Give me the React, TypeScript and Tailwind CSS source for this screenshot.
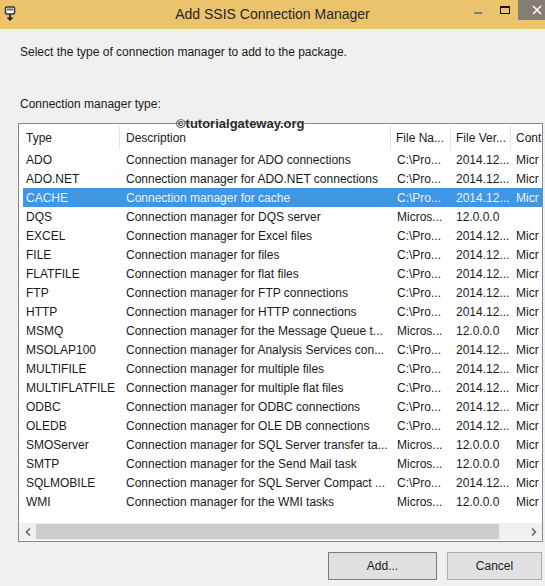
import React from 'react';

type Row = { type: string; desc: string; file: string; ver: string; cont: string };

const rows: Row[] = [
  { type: 'ADO', desc: 'Connection manager for ADO connections', file: 'C:\\Pro...', ver: '2014.12...', cont: 'Micr' },
  { type: 'ADO.NET', desc: 'Connection manager for ADO.NET connections', file: 'C:\\Pro...', ver: '2014.12...', cont: 'Micr' },
  { type: 'CACHE', desc: 'Connection manager for cache', file: 'C:\\Pro...', ver: '2014.12...', cont: 'Micr' },
  { type: 'DQS', desc: 'Connection manager for DQS server', file: 'Micros...', ver: '12.0.0.0', cont: '' },
  { type: 'EXCEL', desc: 'Connection manager for Excel files', file: 'C:\\Pro...', ver: '2014.12...', cont: 'Micr' },
  { type: 'FILE', desc: 'Connection manager for files', file: 'C:\\Pro...', ver: '2014.12...', cont: 'Micr' },
  { type: 'FLATFILE', desc: 'Connection manager for flat files', file: 'C:\\Pro...', ver: '2014.12...', cont: 'Micr' },
  { type: 'FTP', desc: 'Connection manager for FTP connections', file: 'C:\\Pro...', ver: '2014.12...', cont: 'Micr' },
  { type: 'HTTP', desc: 'Connection manager for HTTP connections', file: 'C:\\Pro...', ver: '2014.12...', cont: 'Micr' },
  { type: 'MSMQ', desc: 'Connection manager for the Message Queue t...', file: 'Micros...', ver: '12.0.0.0', cont: 'Micr' },
  { type: 'MSOLAP100', desc: 'Connection manager for Analysis Services con...', file: 'C:\\Pro...', ver: '2014.12...', cont: 'Micr' },
  { type: 'MULTIFILE', desc: 'Connection manager for multiple files', file: 'C:\\Pro...', ver: '2014.12...', cont: 'Micr' },
  { type: 'MULTIFLATFILE', desc: 'Connection manager for multiple flat files', file: 'C:\\Pro...', ver: '2014.12...', cont: 'Micr' },
  { type: 'ODBC', desc: 'Connection manager for ODBC connections', file: 'C:\\Pro...', ver: '2014.12...', cont: 'Micr' },
  { type: 'OLEDB', desc: 'Connection manager for OLE DB connections', file: 'C:\\Pro...', ver: '2014.12...', cont: 'Micr' },
  { type: 'SMOServer', desc: 'Connection manager for SQL Server transfer ta...', file: 'Micros...', ver: '12.0.0.0', cont: 'Micr' },
  { type: 'SMTP', desc: 'Connection manager for the Send Mail task', file: 'Micros...', ver: '12.0.0.0', cont: 'Micr' },
  { type: 'SQLMOBILE', desc: 'Connection manager for SQL Server Compact ...', file: 'C:\\Pro...', ver: '2014.12...', cont: 'Micr' },
  { type: 'WMI', desc: 'Connection manager for the WMI tasks', file: 'Micros...', ver: '12.0.0.0', cont: 'Micr' },
];

const grid = 'grid grid-cols-[97px_271px_60px_60px_1fr]';

const AppIcon = () => (
  <svg width="12" height="16" viewBox="0 0 12 16">
    <rect x="1.5" y="1" width="9" height="7" rx="1" fill="#fff" stroke="#333" strokeWidth="1.5" />
    <rect x="3" y="2.5" width="6" height="2" fill="#666" />
    <path d="M6 8v4" stroke="#333" strokeWidth="2" />
    <path d="M2.5 11.5h7L6 15z" fill="#222" />
  </svg>
);

export default function App() {
  return (
    <div className="relative w-[545px] h-[586px] overflow-hidden bg-[#f0f0f0] flex flex-col font-['Liberation_Sans',Arial,sans-serif] text-[12px] text-[#1a1a1a]">
      {/* title bar */}
      <div className="relative h-[29px] shrink-0 bg-[#ebc36c] flex items-center justify-center">
        <div className="absolute left-[4px] top-[6px]">
          <AppIcon />
        </div>
        <span className="text-[14px] text-[#262626]">Add SSIS Connection Manager</span>
        <div className="absolute right-0 top-0 flex items-start">
          <div className="w-[8px] h-[2px] bg-[#7a7a7a] mt-[12px] mr-[18px]" />
          <div className="w-[10px] h-[8px] border border-[#111] border-t-2 mt-[6px] mr-[8px]" />
          <div className="w-[27px] h-[20px] bg-[#847d74] flex items-center justify-end pr-[2px]">
            <svg width="12" height="12" viewBox="0 0 12 12">
              <path d="M2 2l8 8M10 2l-8 8" stroke="#fff" strokeWidth="1.6" />
            </svg>
          </div>
        </div>
      </div>

      <div className="flex flex-col flex-1">
        <p className="ml-[20px] mt-[15px] leading-[16px]">Select the type of connection manager to add to the package.</p>
        <p className="ml-[20px] mt-[36px] leading-[16px]">Connection manager type:</p>

        {/* list view */}
        <div className="ml-[18px] mt-[11px] w-[525px] h-[419px] border border-[#828790] bg-white flex flex-col overflow-hidden">
          <div className={`${grid} h-[26px] shrink-0 pl-[4px] pt-[2px]`}>
            <div className="pl-[3px] flex items-center border-r border-[#e5e5e5]">Type</div>
            <div className="pl-[6px] flex items-center border-r border-[#e5e5e5]">Description</div>
            <div className="pl-[5px] flex items-center border-r border-[#e5e5e5] whitespace-nowrap overflow-hidden">File Na...</div>
            <div className="pl-[5px] flex items-center border-r border-[#e5e5e5] whitespace-nowrap overflow-hidden">File Ver...</div>
            <div className="pl-[5px] flex items-center whitespace-nowrap overflow-hidden">Cont</div>
          </div>

          <div className="flex-1 pl-[4px]">
            {rows.map((r) => {
              const sel = r.type === 'CACHE';
              return (
                <div
                  key={r.type}
                  className={`${grid} h-[19px] leading-[20px] whitespace-nowrap ${sel ? 'bg-[#3f97e3] text-[#e9f1fa]' : ''}`}
                >
                  <div className="pl-[3px] overflow-hidden">{r.type}</div>
                  <div className="pl-[6px] overflow-hidden">{r.desc}</div>
                  <div className="pl-[6px] overflow-hidden">{r.file}</div>
                  <div className="pl-[5px] overflow-hidden">{r.ver}</div>
                  <div className="pl-[5px] overflow-hidden">{r.cont}</div>
                </div>
              );
            })}
          </div>

          {/* horizontal scrollbar */}
          <div className="h-[17px] mb-[1px] shrink-0 flex items-stretch bg-[#f0f0f0]">
            <div className="w-[17px] flex items-center justify-center">
              <svg width="6" height="8" viewBox="0 0 6 8">
                <path d="M5 0.5L1.5 4L5 7.5" fill="none" stroke="#606060" strokeWidth="1.5" />
              </svg>
            </div>
            <div className="w-[463px] my-[1px] bg-[#cdcdcd]" />
            <div className="flex-1" />
            <div className="w-[17px] flex items-center justify-center">
              <svg width="6" height="8" viewBox="0 0 6 8">
                <path d="M1 0.5L4.5 4L1 7.5" fill="none" stroke="#606060" strokeWidth="1.5" />
              </svg>
            </div>
          </div>
        </div>

        {/* buttons */}
        <div className="flex justify-end gap-[10px] mt-[10px] pr-[3px]">
          <button className="w-[109px] h-[28px] border border-[#7a7a7a] bg-[#e1e1e1] text-[12px] text-[#1a1a1a]">Add...</button>
          <button className="w-[95px] h-[28px] border border-[#adadad] bg-[#e1e1e1] text-[12px] text-[#1a1a1a]">Cancel</button>
        </div>
      </div>

      {/* watermark */}
      <div className="absolute left-[176px] top-[116px] text-[13px] font-bold leading-[15px] text-[#2b2b2b] [text-shadow:0_0_2px_#fff]">
        ©tutorialgateway.org
      </div>
    </div>
  );
}
